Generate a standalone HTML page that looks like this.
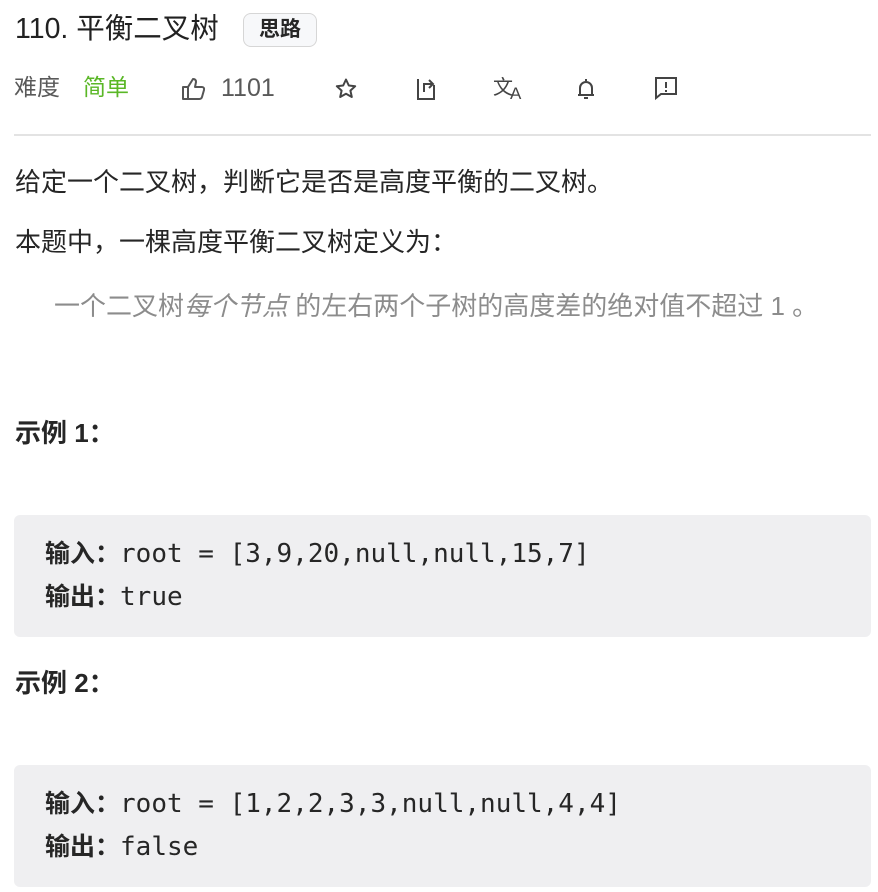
<!DOCTYPE html>
<html><head><meta charset="utf-8"><style>
body{margin:0;width:878px;height:892px;background:#fff;font-family:"Liberation Sans","Noto Sans CJK SC",sans-serif;color:#262626;position:relative;overflow:hidden}
.a{position:absolute;white-space:nowrap;line-height:1}
.t{font-size:26px}
.mono{font-family:"DejaVu Sans Mono","Liberation Mono",monospace;font-size:26px}
.box{position:absolute;left:14px;width:857px;background:#efeff1;border-radius:6px}
svg{position:absolute}
</style></head><body>
<div class="a" style="left:15px;top:15px;font-size:28.5px;color:#212121">110. 平衡二叉树</div>
<div class="a" style="left:243px;top:13px;width:74px;height:34px;border:1.5px solid #d6d6d6;border-radius:8px;background:#f7f8fa;box-sizing:border-box;font-size:21px;font-weight:bold;text-align:center;line-height:31px">思路</div>
<div class="a" style="left:14px;top:76px;font-size:23px;color:#595959">难度</div>
<div class="a" style="left:83px;top:76px;font-size:23px;color:#5ab726">简单</div>
<svg style="left:181px;top:76px" width="26" height="26" viewBox="0 0 26 26" fill="none" stroke="#555" stroke-width="2" stroke-linejoin="round"><path d="M2 11h5v12H2zM7 11l5-8c2 0 3 1 3 3l-1 5h7c1.5 0 2.5 1.3 2 3l-2 7c-.4 1.3-1.3 2-2.6 2H7"/></svg>
<div class="a" style="left:221px;top:76px;font-size:25px;color:#595959">1101</div>
<svg style="left:334px;top:77px" width="24" height="24" viewBox="0 0 24 24" fill="none" stroke="#444" stroke-width="2" stroke-linejoin="round"><path d="M12 2.5l2.8 6 6.4.7-4.8 4.4 1.4 6.4L12 16.8 6.2 20l1.4-6.4L2.8 9.2l6.4-.7z"/></svg>
<svg style="left:413px;top:76px" width="26" height="26" viewBox="0 0 26 26" fill="none" stroke="#444" stroke-width="2"><path d="M5 3v20h16V9M11 16V8h8M16 4l4 4-4 4"/></svg>
<div class="a" style="left:493px;top:78px;font-size:20px;color:#444">文<span style="font-size:17px;position:relative;top:5px;margin-left:-3px">A</span></div>
<svg style="left:574px;top:76px" width="24" height="26" viewBox="0 0 24 26" fill="none" stroke="#444" stroke-width="2"><path d="M12 3v2M6 19V12a6 6 0 0112 0v7M4 19h16M10 22h4"/></svg>
<svg style="left:653px;top:75px" width="26" height="26" viewBox="0 0 26 26" fill="none" stroke="#444" stroke-width="2"><path d="M3 3h20v16H8l-5 4z"/><path d="M13 7v6M13 15v2"/></svg>
<div style="position:absolute;left:14px;top:134px;width:857px;height:1.5px;background:#e3e3e3"></div>
<div class="a t" style="left:15px;top:169px">给定一个二叉树，判断它是否是高度平衡的二叉树。</div>
<div class="a t" style="left:15px;top:229px">本题中，一棵高度平衡二叉树定义为：</div>
<div class="a t" style="left:54px;top:293px;color:#8c8c8c">一个二叉树<i>每个节点</i> 的左右两个子树的高度差的绝对值不超过 1 。</div>
<div class="a t" style="left:15px;top:420px;font-weight:bold">示例 1：</div>
<div class="box" style="top:515px;height:122px"></div>
<div class="a mono" style="left:45px;top:540px"><b style="font-family:'Noto Sans CJK SC',sans-serif;font-size:25px">输入：</b>root = [3,9,20,null,null,15,7]</div>
<div class="a mono" style="left:45px;top:583px"><b style="font-family:'Noto Sans CJK SC',sans-serif;font-size:25px">输出：</b>true</div>
<div class="a t" style="left:15px;top:670px;font-weight:bold">示例 2：</div>
<div class="box" style="top:765px;height:122px"></div>
<div class="a mono" style="left:45px;top:790px"><b style="font-family:'Noto Sans CJK SC',sans-serif;font-size:25px">输入：</b>root = [1,2,2,3,3,null,null,4,4]</div>
<div class="a mono" style="left:45px;top:833px"><b style="font-family:'Noto Sans CJK SC',sans-serif;font-size:25px">输出：</b>false</div>
</body></html>
